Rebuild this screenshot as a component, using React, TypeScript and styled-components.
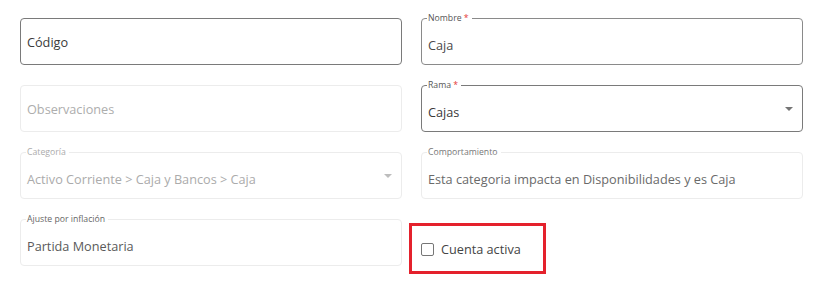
import React from 'react'
import styled, { createGlobalStyle } from 'styled-components'

const GlobalStyle = createGlobalStyle`
  html, body {
    margin: 0;
    padding: 0;
    background: #ffffff;
    font-family: 'Open Sans', 'Noto Sans', sans-serif;
  }
`

type Tone = 'strong' | 'normal' | 'muted'

const borderColors: Record<Tone, string> = {
  strong: '#7a7a7a',
  normal: '#8a8a8a',
  muted: '#ececec',
}

interface FieldProps {
  label?: string
  labelColor?: string
  required?: boolean
  value: string
  tone: Tone
  textColor: string
  select?: boolean
  arrowColor?: string
}

const Field: React.FC<FieldProps> = ({ label, labelColor, required, value, tone, textColor, select, arrowColor }) => {
  return (
    <StyledFieldset $tone={tone}>
      <StyledLegend $empty={!label} $color={labelColor || '#555555'}>
        {label}
        {required && <StyledStar> *</StyledStar>}
      </StyledLegend>
      <StyledInner $labeled={!!label}>
        <StyledValue $color={textColor}>{value}</StyledValue>
        {select && <StyledArrow $color={arrowColor || '#757575'} $labeled={!!label} />}
      </StyledInner>
    </StyledFieldset>
  )
}

const App: React.FC = () => {
  return (
    <>
      <GlobalStyle />
      <StyledForm>
        <Field value="Código" tone="strong" textColor="#3a3a3a" />
        <Field label="Nombre" required value="Caja" tone="normal" textColor="#4a4a4a" />
        <Field value="Observaciones" tone="muted" textColor="#adadad" />
        <Field label="Rama" required value="Cajas" tone="strong" textColor="#3a3a3a" select />
        <Field
          label="Categoría"
          labelColor="#ababab"
          value="Activo Corriente > Caja y Bancos > Caja"
          tone="muted"
          textColor="#ababab"
          select
          arrowColor="#bdbdbd"
        />
        <Field
          label="Comportamiento"
          labelColor="#777777"
          value="Esta categoria impacta en Disponibilidades y es Caja"
          tone="muted"
          textColor="#6a6a6a"
        />
        <Field
          label="Ajuste por inflación"
          labelColor="#666666"
          value="Partida Monetaria"
          tone="muted"
          textColor="#5a5a5a"
        />
        <StyledCheckCell>
          <StyledHighlight>
            <StyledCheckLabel>
              <StyledCheckbox />
              Cuenta activa
            </StyledCheckLabel>
          </StyledHighlight>
        </StyledCheckCell>
      </StyledForm>
    </>
  )
}

const StyledForm = styled.div`
  display: grid;
  grid-template-columns: 382px 382px;
  column-gap: 19px;
  row-gap: 14px;
  padding: 12px 0 0 20px;
`

const StyledFieldset = styled.fieldset<{ $tone: Tone }>`
  box-sizing: border-box;
  height: 53px;
  margin: 0;
  padding: 0 8px 0 6px;
  min-width: 0;
  border: 1px solid ${(props) => borderColors[props.$tone]};
  border-radius: 4px;
`

const StyledLegend = styled.legend<{ $empty: boolean; $color: string }>`
  height: 12px;
  line-height: 12px;
  font-size: 8.7px;
  color: ${(props) => props.$color};
  padding: ${(props) => (props.$empty ? '0' : '0 3px 0 1px')};
  margin-left: -1px;
  white-space: nowrap;
`

const StyledStar = styled.span`
  color: #e53935;
`

const StyledInner = styled.div<{ $labeled: boolean }>`
  display: flex;
  align-items: center;
  justify-content: space-between;
  padding-top: ${(props) => (props.$labeled ? '11px' : '8px')};
  height: 20px;
`

const StyledValue = styled.span<{ $color: string }>`
  font-size: 12.7px;
  line-height: 20px;
  color: ${(props) => props.$color};
  white-space: nowrap;
`

const StyledArrow = styled.span<{ $color: string; $labeled: boolean }>`
  width: 0;
  height: 0;
  margin-right: 1px;
  margin-top: ${(props) => (props.$labeled ? '-6px' : '-3px')};
  border-left: 4px solid transparent;
  border-right: 4px solid transparent;
  border-top: 4px solid ${(props) => props.$color};
`

const StyledCheckCell = styled.div`
  display: flex;
  align-items: flex-start;
`

const StyledHighlight = styled.div`
  box-sizing: border-box;
  width: 137px;
  height: 51px;
  margin: 10px 0 0 -12px;
  padding-left: 9px;
  border: 3px solid #e4212c;
  display: flex;
  align-items: center;
`

const StyledCheckLabel = styled.label`
  display: flex;
  align-items: center;
  gap: 7px;
  font-size: 12.7px;
  color: #444444;
  cursor: pointer;
`

const StyledCheckbox = styled.span`
  box-sizing: border-box;
  width: 13px;
  height: 13px;
  border: 1.5px solid #767676;
  border-radius: 2px;
  margin-top: 1px;
`

export default App
